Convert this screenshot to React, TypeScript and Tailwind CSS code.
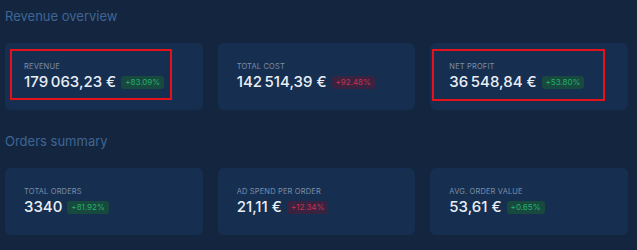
import React from "react";

type Stat = {
  label: string;
  value: string;
  change: string;
  up: boolean;
  mark?: "first" | "third";
};

const revenue: Stat[] = [
  { label: "Revenue", value: "179\u2009063,23 €", change: "+83.09%", up: true, mark: "first" },
  { label: "Total cost", value: "142\u2009514,39 €", change: "+92.48%", up: false },
  { label: "Net profit", value: "36\u2009548,84 €", change: "+53.80%", up: true, mark: "third" },
];

const orders: Stat[] = [
  { label: "Total orders", value: "3340", change: "+81.92%", up: true },
  { label: "Ad spend per order", value: "21,11 €", change: "+12.34%", up: false },
  { label: "Avg. order value", value: "53,61 €", change: "+0.65%", up: true },
];

const StatCard: React.FC<{ stat: Stat }> = ({ stat }) => {
  return (
    <div className="relative h-[67px] rounded-[6px] bg-[#162f50] pl-[19px] pt-[19px]">
      <div className="text-[7.5px] leading-[9px] uppercase tracking-[0.02em] text-[#7b8da8]">
        {stat.label}
      </div>
      <div className="mt-[1px] flex flex-row items-center gap-[5px]">
        <span className="text-[15px] leading-[20px] font-medium text-[#e9eef6]">{stat.value}</span>
        <span
          className={
            stat.up
              ? "rounded-[3px] bg-[#17493f] px-[4px] text-[8px] leading-[13px] text-[#23b26b]"
              : "rounded-[3px] bg-[#3a2341] px-[4px] text-[8px] leading-[13px] text-[#c3344f]"
          }
        >
          {stat.change}
        </span>
      </div>
      {/* red annotation boxes from the screenshot */}
      {stat.mark === "first" && (
        <div className="absolute left-[5px] top-[6px] h-[51px] w-[162px] border-2 border-[#e5121b]" />
      )}
      {stat.mark === "third" && (
        <div className="absolute left-[2px] top-[6px] h-[52px] w-[173px] border-2 border-[#e5121b]" />
      )}
    </div>
  );
};

const Section: React.FC<{ title: string; stats: Stat[] }> = ({ title, stats }) => {
  return (
    <div>
      <h2 className="text-[13px] leading-[20px] text-[#3f6594]">{title}</h2>
      <div className="mt-[17px] grid grid-cols-3 gap-[15px]">
        {stats.map((s) => (
          <StatCard key={s.label} stat={s} />
        ))}
      </div>
    </div>
  );
};

export default function App() {
  return (
    <div
      className="h-[250px] w-[637px] overflow-hidden bg-[#14263f] pl-[5px] pr-[9px] pt-[6px]"
      style={{ fontFamily: "Inter, 'Noto Sans', sans-serif" }}
    >
      <div className="flex flex-col gap-[21px]">
        <Section title="Revenue overview" stats={revenue} />
        <Section title="Orders summary" stats={orders} />
      </div>
    </div>
  );
}
